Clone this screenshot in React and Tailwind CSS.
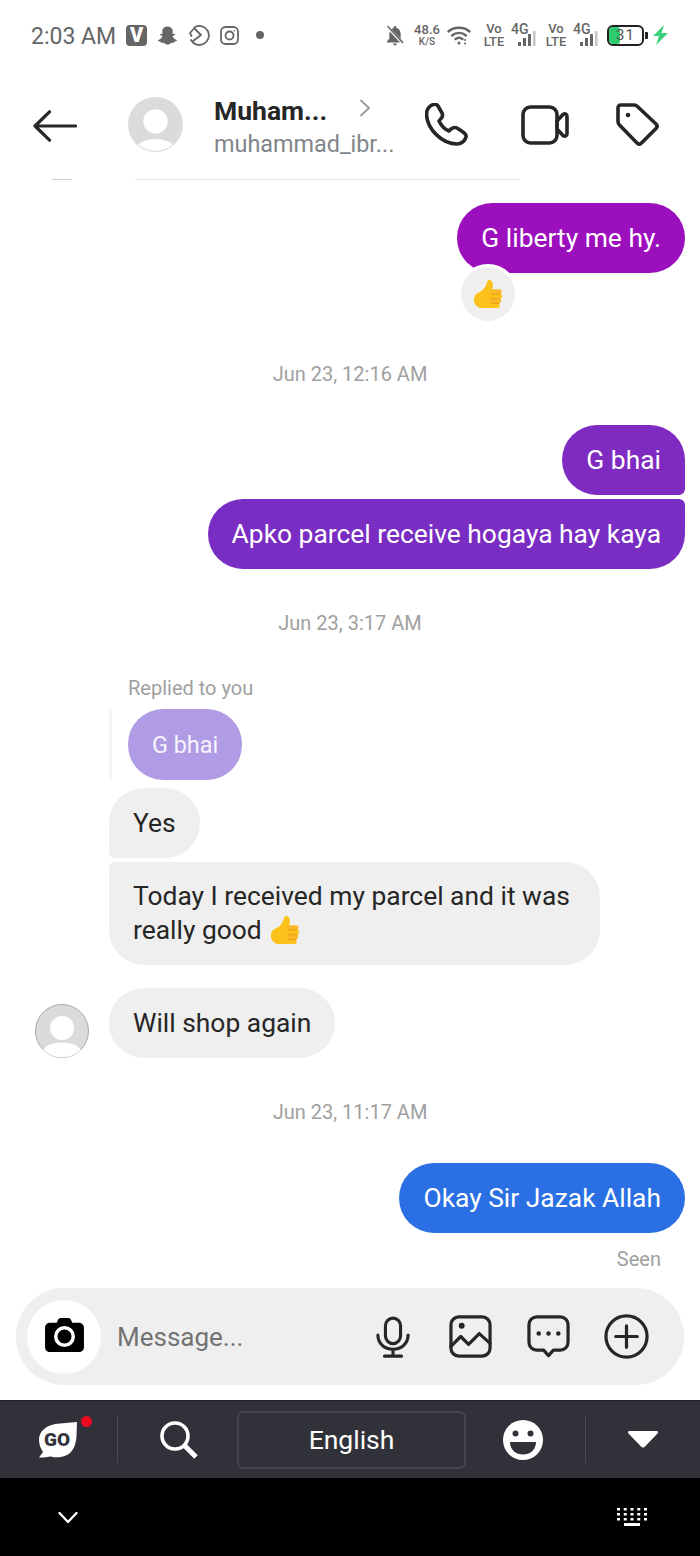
import React from 'react';
import { FaSnapchatGhost } from 'react-icons/fa';

function Avatar({ ring }) {
  return (
    <svg width="54" height="54" viewBox="0 0 54 54" className="shrink-0">
      <defs>
        <clipPath id={ring ? 'clipA' : 'clipB'}>
          <circle cx="27" cy="27" r="26.500" />
        </clipPath>
      </defs>
      <circle cx="27" cy="27" r="26.500" fill="#dbdbdb" stroke={ring ? '#a8a8a8' : '#dbdbdb'} strokeWidth="1" />
      <g clipPath={`url(#${ring ? 'clipA' : 'clipB'})`}>
        <circle cx="27" cy="24" r="12" fill="#fff" />
        <ellipse cx="27" cy="48" rx="19" ry="9.500" fill="#fff" />
      </g>
    </svg>
  );
}

function Thumb({ size }) {
  return (
    <svg width={size} height={size} viewBox="0 0 32 32" className="shrink-0">
      <path d="M17.500 1C15.500 1 15 3 14.500 5C13.500 8 11.500 11 8.500 13L4 15.500C2 17 1 19 1 22C1 27 5 31 10 31H21V11.500H20.500C21 8.500 21.500 6.500 21 4.500C20.500 2.500 19.300 1 17.500 1Z" fill="#fcc21b" />
      <rect x="18" y="11" width="12.500" height="5.500" rx="2.700" fill="#fbb829" />
      <rect x="18" y="15.700" width="13" height="5.500" rx="2.700" fill="#fcc21b" />
      <rect x="18" y="20.500" width="12" height="5.500" rx="2.700" fill="#fbb829" />
      <rect x="18" y="25.500" width="10.500" height="5.500" rx="2.700" fill="#fcc21b" />
      <path d="M20 16h8M20 21h8.500M20 26h7.500" stroke="#e39a10" strokeWidth="1" strokeLinecap="round" fill="none" />
    </svg>
  );
}

function Stamp({ className, children }) {
  return (
    <div className={`h-[24px] pt-[1px] text-center text-[20px] leading-[24px] text-[#a0a0a0] ${className}`}>
      {children}
    </div>
  );
}

function SignalBars() {
  return (
    <svg width="18" height="16" viewBox="0 0 18 16">
      <rect x="0" y="11" width="3" height="4" fill="#666" />
      <rect x="5" y="7" width="3" height="8" fill="#666" />
      <rect x="10" y="3" width="3" height="12" fill="#666" />
      <rect x="15" y="0" width="2.500" height="15" fill="#c4c4c4" />
    </svg>
  );
}

function StatusNet({ className }) {
  return (
    <div className={`flex items-center ${className}`}>
      <div className="flex w-[20px] flex-col items-center text-[13px] font-medium leading-[13px] text-[#666]">
        <span>Vo</span>
        <span>LTE</span>
      </div>
      <div className="relative ml-[7px] h-[24px] w-[27px]">
        <span className="absolute left-0 top-0 text-[14px] font-medium leading-[13px] text-[#666]">4G</span>
        <div className="absolute bottom-0 right-[2px] h-[16px] w-[18px]">
          <SignalBars />
        </div>
      </div>
    </div>
  );
}

function StatusBar() {
  return (
    <div className="flex h-[70px] items-center justify-between pl-[31px] pr-[31px]">
      <div className="flex items-center">
        <span className="pt-[5px] text-[23px] text-[#666]">2:03 AM</span>
        <div className="ml-[10px] flex h-[21px] w-[21px] items-center justify-center rounded-[4px] bg-[#666] text-[20px] font-black leading-none text-white">V</div>
        <FaSnapchatGhost className="ml-[11px] text-[19px] text-[#666]" />
        <svg width="22" height="22" viewBox="0 0 22 22" className="ml-[11px]" fill="none" stroke="#666" strokeWidth="1.800" strokeLinecap="round" strokeLinejoin="round">
          <path d="M7 3a9.500 9.500 0 1 1-4 13" />
          <path d="M5 5.500 2 9l1.500 3M6 4l7 7-8 6" />
        </svg>
        <svg width="19" height="19" viewBox="0 0 19 19" className="ml-[10px]" fill="none" stroke="#666" strokeWidth="1.800">
          <rect x="1" y="1" width="17" height="17" rx="4.500" />
          <circle cx="9.500" cy="9.500" r="4" />
          <circle cx="14.200" cy="4.800" r="0.800" fill="#666" stroke="none" />
        </svg>
        <div className="ml-[17px] h-[8px] w-[8px] rounded-full bg-[#666]" />
      </div>
      <div className="flex items-center">
        <svg width="18" height="22" viewBox="0 0 19 22">
          <path d="M9.500 1.500c-.9 0-1.500.7-1.500 1.500v.6C5 4.400 3.500 7 3.500 10v5L1 17.500V19h17v-1.500L15.500 15v-5c0-3-1.500-5.600-4.500-6.400V3c0-.8-.6-1.500-1.500-1.500Z" fill="#666" />
          <path d="M7.500 20a2 2 0 0 0 4 0Z" fill="#666" />
          <path d="M1 2 18 20" stroke="#fff" strokeWidth="3" />
          <path d="M1.500 1.500 18 19.500" stroke="#666" strokeWidth="1.600" />
        </svg>
        <div className="ml-[10px] flex w-[26px] flex-col items-center text-[#666]">
          <span className="text-[13px] font-medium leading-[13px]">48.6</span>
          <span className="text-[10px] font-medium leading-[11px]">K/S</span>
        </div>
        <svg width="24" height="20" viewBox="0 0 24 20" className="ml-[7px]" fill="none" stroke="#666" strokeWidth="2.400" strokeLinecap="round">
          <path d="M1.500 6.500C7 1.500 17 1.500 22.500 6.500" />
          <path d="M5 10.500c4-3.500 10-3.500 14 0" />
          <path d="M8.500 14c2-1.500 5-1.500 7 0" />
          <circle cx="12" cy="18" r="1.500" fill="#666" stroke="none" />
          <circle cx="18" cy="15" r="1.100" fill="#666" stroke="none" />
          <circle cx="18" cy="18.500" r="1.100" fill="#666" stroke="none" />
        </svg>
        <StatusNet className="ml-[13px]" />
        <StatusNet className="ml-[8px]" />
        <div className="relative ml-[7px] h-[21px] w-[37px] overflow-hidden rounded-[6px] border-2 border-[#222]">
          <div className="h-full w-[11px] rounded-[3px] bg-[#2ecc71]" />
          <span className="absolute inset-0 text-center text-[15px] leading-[17px] tracking-[1px] text-[#555]">31</span>
        </div>
        <div className="ml-[1px] h-[7px] w-[3px] rounded-r-[1px] bg-[#222]" />
        <svg width="17" height="20" viewBox="0 0 17 20" className="ml-[4px]">
          <path d="M12 0 1 11h6L4 20l12-12H9.500Z" fill="#3ccf7a" />
        </svg>
      </div>
    </div>
  );
}

function Header() {
  return (
    <div className="relative flex h-[110px] shrink-0 items-start">
      <svg width="44" height="32" viewBox="0 0 44 32" className="ml-[33px] mt-[40px] shrink-0" fill="none" stroke="#262626" strokeWidth="3.200" strokeLinecap="round" strokeLinejoin="round">
        <path d="M42.500 16H2M16.500 1.800 2 16l14.500 14.200" />
      </svg>
      <div className="ml-[51px] mt-[27px] h-[55px] w-[55px]">
        <svg width="55" height="55" viewBox="0 0 54 54">
          <circle cx="27" cy="27" r="27" fill="#dbdbdb" />
          <circle cx="27" cy="24" r="12" fill="#fff" />
          <path d="M10 47a18 8.500 0 0 1 34 0a27 27 0 0 1-34 0Z" fill="#fff" />
        </svg>
      </div>
      <div className="ml-[31px] mt-[24px] w-[178px]">
        <div className="text-[26.500px] font-bold leading-[34px] text-[#262626]">Muham...</div>
        <div className="mt-[1px] text-[23.400px] leading-[30px] text-[#80858a]">muhammad_ibr...</div>
      </div>
      <svg width="12" height="18" viewBox="0 0 12 18" className="-ml-[33px] mt-[29px] shrink-0" fill="none" stroke="#9a9a9a" strokeWidth="1.800" strokeLinecap="round" strokeLinejoin="round">
        <path d="M2 1.500 10 9l-8 7.500" />
      </svg>
      <svg width="43" height="43" viewBox="0 0 43 43" className="ml-[54px] mt-[33px] shrink-0" fill="none" stroke="#262626" strokeWidth="3.600" strokeLinejoin="round">
        <path d="M8 1.500C4 3 1.500 7 1.500 11C2 26 17 41 32 41C36 41 40 38 41 34C41.500 32 40 30.500 38 29L32 25C30 24 28 24.500 26 26L24 28C20 26.500 16 22 14 18L16 15.500C17.500 14 18 12 17 10L13 3C12 1.500 10 1 8 1.500Z" />
      </svg>
      <svg width="48" height="40" viewBox="0 0 48 40" className="ml-[53px] mt-[35px] shrink-0" fill="none" stroke="#262626" strokeWidth="3.600" strokeLinejoin="round">
        <rect x="2" y="2" width="34" height="36" rx="7.500" />
        <path d="M36 16 42 9.500C44 8 46 9 46 11.500V28.500C46 31 44 32 42 30.500L36 24Z" />
      </svg>
      <svg width="43" height="43" viewBox="0 0 43 43" className="ml-[47px] mt-[33px] shrink-0" fill="none" stroke="#262626" strokeWidth="3.600" strokeLinejoin="round">
        <path d="M5 2H18C19.500 2 20.500 2.500 21.500 3.500L40 21C41.500 22.500 41.500 24 40 25.500L25.500 40C24 41.500 22.500 41.500 21 40L3.500 22C2.500 21 2 20 2 18.500V5C2 3 3 2 5 2Z" />
        <circle cx="12" cy="12" r="2.300" fill="#262626" stroke="none" />
      </svg>
      {/* scrolled-away content peeking under the header */}
      <div className="absolute bottom-0 left-[135px] h-px w-[385px] bg-[#e9e9e9]" />
      <div className="absolute bottom-0 left-[52px] h-px w-[20px] bg-[#cfcfcf]" />
    </div>
  );
}

function Composer() {
  return (
    <div className="shrink-0 px-[16px] pb-[15px]">
      <div className="flex h-[97px] items-center rounded-[48px] bg-[#efefef] pl-[11px]">
        <div className="flex h-[74px] w-[74px] shrink-0 items-center justify-center rounded-full bg-white">
          <svg width="39" height="35" viewBox="0 0 40 36" className="mb-[2px]">
            <path d="M13 2.500C13.500 1 14.500 0 16 0H24C25.500 0 26.500 1 27 2.500L28 5H35C37.800 5 40 7.200 40 10V30C40 33 37.800 35 35 35H5C2.200 35 0 33 0 30V10C0 7.200 2.200 5 5 5H12Z" fill="#000" />
            <circle cx="20" cy="19" r="9" fill="none" stroke="#fff" strokeWidth="3.600" />
          </svg>
        </div>
        <span className="ml-[16px] w-[259px] pt-[2px] text-[26px] text-[#737373]">Message...</span>
        <svg width="34" height="44" viewBox="0 0 36 44" className="shrink-0" fill="none" stroke="#262626" strokeWidth="3.300" strokeLinecap="round" strokeLinejoin="round">
          <rect x="10" y="2" width="16" height="27" rx="8" />
          <path d="M2 20c0 9 7 15 16 15s16-6 16-15M18 35v7M9 42.300h18" />
        </svg>
        <svg width="43" height="43" viewBox="0 0 44 44" className="ml-[39px] shrink-0" fill="none" stroke="#262626" strokeWidth="3.300" strokeLinejoin="round">
          <rect x="2" y="2" width="40" height="40" rx="8" />
          <circle cx="13" cy="11" r="3" fill="#262626" stroke="none" />
          <path d="M2 32 12 22l8 8 11-11 11 10" strokeLinecap="round" />
        </svg>
        <svg width="43" height="43" viewBox="0 0 44 44" className="ml-[35px] shrink-0" fill="none" stroke="#262626" strokeWidth="3.300" strokeLinejoin="round">
          <path d="M10 2H34C38.500 2 42 5.500 42 10V28C42 32.500 38.500 36 34 36H27L22 41.500L17 36H10C5.500 36 2 32.500 2 28V10C2 5.500 5.500 2 10 2Z" />
          <circle cx="12" cy="19" r="2.300" fill="#262626" stroke="none" />
          <circle cx="22" cy="19" r="2.300" fill="#262626" stroke="none" />
          <circle cx="32" cy="19" r="2.300" fill="#262626" stroke="none" />
        </svg>
        <svg width="45" height="45" viewBox="0 0 46 46" className="ml-[34px] shrink-0" fill="none" stroke="#262626" strokeWidth="3.300" strokeLinecap="round">
          <circle cx="23" cy="23" r="21" />
          <path d="M23 12v22M12 23h22" />
        </svg>
      </div>
    </div>
  );
}

function KeyboardBar() {
  return (
    <div className="flex h-[78px] shrink-0 items-center border-t border-[#1f1f24] bg-[#31313a]">
      <div className="relative ml-[39px] h-[40px] w-[40px] shrink-0">
        <svg width="40" height="40" viewBox="0 0 40 40" className="absolute left-0 top-0">
          <path d="M38 2C30 3 23 3 16 4C7 6 0 11 0 20C0 25 2 29 4 32L0 37.500C5 37.500 9 37 12 36.500C17 38 23 37.500 28 35C34 32 37 25 37.500 16Z" fill="#fff" />
        </svg>
        <span className="absolute left-[5px] top-[9px] text-[19px] font-black leading-[22px] text-[#33333b]">GO</span>
        <div className="absolute -right-[13px] -top-[4px] h-[11px] w-[11px] rounded-full bg-[#ee0a1e]" />
      </div>
      <div className="ml-[38px] h-[47px] w-px shrink-0 bg-[#4a4a52]" />
      <svg width="40" height="40" viewBox="0 0 40 40" className="ml-[41px] shrink-0" fill="none" stroke="#fff" strokeLinecap="round">
        <circle cx="16" cy="16" r="13" strokeWidth="3.600" />
        <path d="M26 26l11 11" strokeWidth="5" strokeLinecap="butt" />
      </svg>
      <div className="ml-[38px] flex h-[58px] w-[229px] shrink-0 items-center justify-center rounded-[6px] border-2 border-[#45454d] pt-[1px] text-[26.500px] text-white">
        English
      </div>
      <svg width="40" height="40" viewBox="0 0 40 40" className="ml-[37px] shrink-0">
        <circle cx="20" cy="20" r="20" fill="#fff" />
        <circle cx="12.500" cy="13.500" r="3" fill="#31313a" />
        <circle cx="27.500" cy="13.500" r="3" fill="#31313a" />
        <path d="M7 22H33C33 30 27 34.500 20 34.500S7 30 7 22Z" fill="#31313a" />
      </svg>
      <div className="ml-[42px] h-[47px] w-px shrink-0 bg-[#4a4a52]" />
      <svg width="30" height="17" viewBox="0 0 30 17" className="ml-[42px] shrink-0">
        <path d="M1.500 0H28.500C30 0 30.500 1.500 29.500 2.500L17 15.500C15.800 16.800 14.200 16.800 13 15.500L.5 2.500C-.5 1.500 0 0 1.500 0Z" fill="#fff" />
      </svg>
    </div>
  );
}

function NavBar() {
  return (
    <div className="flex h-[78px] shrink-0 items-center justify-between bg-black pl-[58px] pr-[53px]">
      <svg width="20" height="13" viewBox="0 0 20 13" fill="none" stroke="#fff" strokeWidth="2.400" strokeLinecap="round" strokeLinejoin="round">
        <path d="M1.500 2 10 11l8.500-9" />
      </svg>
      <svg width="30" height="18" viewBox="0 0 30 18" fill="#fff">
        <rect x="0" y="0" width="3" height="2.500" />
        <rect x="6.750" y="0" width="3" height="2.500" />
        <rect x="13.500" y="0" width="3" height="2.500" />
        <rect x="20.250" y="0" width="3" height="2.500" />
        <rect x="27" y="0" width="3" height="2.500" />
        <rect x="0" y="5" width="3" height="2.500" />
        <rect x="6.750" y="5" width="3" height="2.500" />
        <rect x="13.500" y="5" width="3" height="2.500" />
        <rect x="20.250" y="5" width="3" height="2.500" />
        <rect x="27" y="5" width="3" height="2.500" />
        <rect x="0" y="10" width="3" height="2.500" />
        <rect x="6.750" y="10" width="3" height="2.500" />
        <rect x="13.500" y="10" width="3" height="2.500" />
        <rect x="20.250" y="10" width="3" height="2.500" />
        <rect x="27" y="10" width="3" height="2.500" />
        <rect x="7" y="15" width="16" height="3" />
      </svg>
    </div>
  );
}

function Messages() {
  const bubble = 'px-[24px] py-[18px] text-[26.400px] leading-[34px]';
  return (
    <div className="min-h-0 flex-1 overflow-hidden">
      <div className="mt-[23px] flex justify-end pr-[15px]">
        <div className="relative">
          <div className={`rounded-[35px] bg-[#9c0fbd] text-white ${bubble}`}>G liberty me hy.</div>
          <div className="absolute -bottom-[51px] left-[1px] flex h-[60px] w-[60px] items-center justify-center rounded-full border-[3px] border-white bg-[#efefef]">
            <Thumb size={30} />
          </div>
        </div>
      </div>

      <Stamp className="mt-[88px]">Jun 23, 12:16 AM</Stamp>

      <div className="mt-[40px] flex justify-end pr-[15px]">
        <div className={`rounded-[35px] rounded-br-[6px] bg-[#7f2bc1] text-white ${bubble}`}>G bhai</div>
      </div>
      <div className="mt-[4px] flex justify-end pr-[15px]">
        <div className={`rounded-[35px] rounded-tr-[6px] bg-[#7a2dc2] text-white ${bubble}`}>Apko parcel receive hogaya hay kaya</div>
      </div>

      <Stamp className="mt-[41px]">Jun 23, 3:17 AM</Stamp>

      <div className="ml-[128px] mt-[42px] h-[24px] text-[20px] leading-[24px] text-[#a0a0a0]">Replied to you</div>
      <div className="ml-[109px] mt-[9px] flex h-[71px] items-stretch">
        <div className="w-[3px] bg-[#f4f4f4]" />
        <div className="ml-[16px] flex items-center rounded-[35px] bg-[#b09ce4] px-[24px] pt-[3px] text-[23.400px] text-[#f7f4fd]">G bhai</div>
      </div>

      <div className="ml-[109px] mt-[8px] flex">
        <div className={`rounded-[35px] rounded-bl-[6px] bg-[#efefef] text-[#262626] ${bubble}`}>Yes</div>
      </div>
      <div className="ml-[109px] mt-[4px] flex">
        <div className="w-[491px] rounded-[35px] rounded-tl-[6px] bg-[#efefef] px-[24px] pb-[18.500px] pt-[16.500px] text-[26.400px] leading-[34px] text-[#262626]">
          <div>Today I received my parcel and it was</div>
          <div className="flex items-center">
            really good
            <span className="ml-[8px]">
              <Thumb size={30} />
            </span>
          </div>
        </div>
      </div>

      <div className="ml-[35px] mt-[23px] flex items-end">
        <Avatar ring />
        <div className={`ml-[20px] rounded-[35px] bg-[#efefef] text-[#262626] ${bubble}`}>Will shop again</div>
      </div>

      <Stamp className="mt-[41px]">Jun 23, 11:17 AM</Stamp>

      <div className="mt-[40px] flex justify-end pr-[15px]">
        <div className={`rounded-[35px] bg-[#2a70e4] text-white ${bubble}`}>Okay Sir Jazak Allah</div>
      </div>
      <div className="mt-[14px] h-[24px] pr-[39px] text-right text-[20px] leading-[24px] text-[#a0a0a0]">Seen</div>
    </div>
  );
}

export default function App() {
  return (
    <div className="flex h-[1556px] w-[700px] flex-col overflow-hidden bg-white font-['Roboto',sans-serif]">
      <StatusBar />
      <Header />
      <Messages />
      <Composer />
      <KeyboardBar />
      <NavBar />
    </div>
  );
}
